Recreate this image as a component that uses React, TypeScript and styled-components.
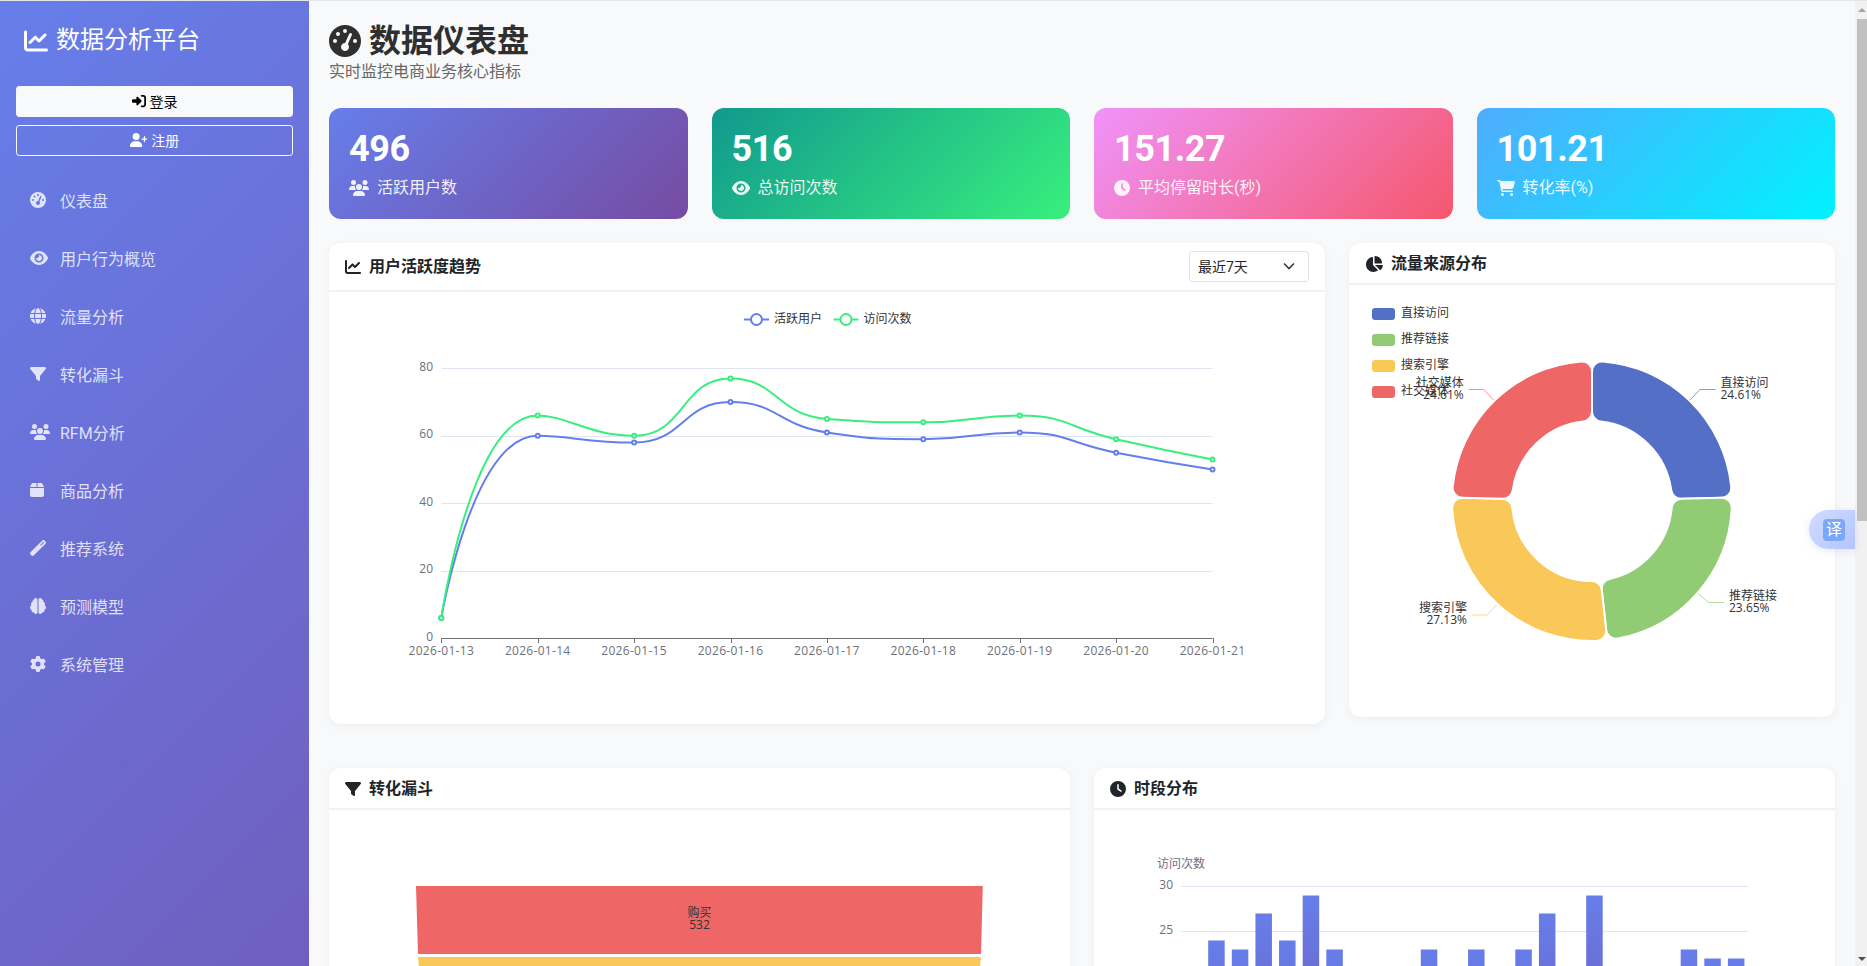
import React from "react";
import styled, { createGlobalStyle } from "styled-components";
import type { IconType } from "react-icons";
import {
  FaBox,
  FaBrain,
  FaCartShopping,
  FaChartLine,
  FaChartPie,
  FaClock,
  FaEye,
  FaFilter,
  FaGaugeHigh,
  FaGear,
  FaGlobe,
  FaRightToBracket,
  FaUserPlus,
  FaUsers,
  FaWandMagic,
} from "react-icons/fa6";

const FONT = `Roboto, "Noto Sans CJK SC", sans-serif`;
const CHART_FONT = `"Open Sans", "Noto Sans CJK SC", sans-serif`;

const GlobalStyle = createGlobalStyle`
  html, body {
    margin: 0;
    padding: 0;
    overflow: hidden;
  }
  body {
    font-family: ${FONT};
    color: #212529;
  }
  * {
    box-sizing: border-box;
  }
`;

// font awesome glyphs are not all square, the react-icons default box would shrink them
const glyph = (icon: IconType, width: number) => styled(icon)`
  display: block;
  flex-shrink: 0;
  height: 1em;
  width: ${width}em;
`;

const ChartLineIcon = glyph(FaChartLine, 1);
const ChartPieIcon = glyph(FaChartPie, 1.125);
const ClockIcon = glyph(FaClock, 1);
const EyeIcon = glyph(FaEye, 1.125);
const FilterIcon = glyph(FaFilter, 1);
const GaugeIcon = glyph(FaGaugeHigh, 1);
const UsersIcon = glyph(FaUsers, 1.25);
const CartIcon = glyph(FaCartShopping, 1.125);
const GlobeIcon = glyph(FaGlobe, 1);
const BoxIcon = glyph(FaBox, 0.875);
const WandIcon = glyph(FaWandMagic, 1);
const BrainIcon = glyph(FaBrain, 1);
const GearIcon = glyph(FaGear, 1);
const SignInIcon = glyph(FaRightToBracket, 1);
const UserPlusIcon = glyph(FaUserPlus, 1.25);

const Page = styled.div`
  position: relative;
  display: flex;
  align-items: flex-start;
  height: 966px;
  overflow: hidden;
  background: #f8f9fa;
  border-top: 1px solid #e3e5e8;
`;

const Sidebar = styled.aside`
  flex: 0 0 309px;
  height: 1790px;
  background: linear-gradient(135deg, #667eea 0%, #764ba2 100%);
  color: #fff;
`;

const Brand = styled.div`
  display: flex;
  align-items: center;
  gap: 8px;
  height: 85px;
  padding: 25px 24px 31px;
  font-size: 24px;
  line-height: 29px;
`;

const AuthBox = styled.div`
  display: flex;
  flex-direction: column;
  gap: 8px;
  padding: 0 16px;
`;

const AuthButton = styled.div<{ $solid?: boolean }>`
  display: flex;
  align-items: center;
  justify-content: center;
  gap: 4px;
  height: 31px;
  padding-bottom: 1px;
  font-size: 14px;
  border-radius: 3.2px;
  border: 1px solid #f8f9fa;
  background: ${(p) => (p.$solid ? "#f8f9fa" : "transparent")};
  color: ${(p) => (p.$solid ? "#000" : "#fff")};
`;

const Nav = styled.nav`
  margin-top: 16px;
`;

const NavItem = styled.div`
  display: flex;
  align-items: center;
  height: 58px;
  padding: 0 0 2px 30px;
  font-size: 16px;
  color: rgba(255, 255, 255, 0.8);
`;

const NavIcon = styled.span`
  flex: 0 0 30px;
`;

const Main = styled.main`
  flex: 1;
  min-width: 0;
  padding: 21px 20px 0;
`;

const Title = styled.h1`
  display: flex;
  align-items: center;
  gap: 8px;
  margin: 0;
  font-size: 32px;
  line-height: 38px;
  font-weight: 700;
  color: #2f2f2f;
`;

const Subtitle = styled.p`
  margin: 0 0 24px;
  font-size: 16px;
  line-height: 24px;
  color: #666;
`;

const StatRow = styled.div`
  display: grid;
  grid-template-columns: repeat(4, 1fr);
  gap: 24px;
  margin-bottom: 24px;
`;

const StatCard = styled.div<{ $from: string; $to: string }>`
  height: 111px;
  padding: 20px;
  border-radius: 12px;
  color: #fff;
  background: linear-gradient(135deg, ${(p) => p.$from} 0%, ${(p) => p.$to} 100%);
`;

const StatValue = styled.div`
  font-size: 36px;
  line-height: 42px;
  font-weight: 700;
  letter-spacing: -0.4px;
  margin-bottom: 6px;
`;

const StatLabel = styled.div`
  display: flex;
  align-items: center;
  gap: 8px;
  font-size: 16px;
  line-height: 24px;
  opacity: 0.9;
`;

const ChartRow = styled.div<{ $columns: string; $bottom?: number }>`
  display: grid;
  grid-template-columns: ${(p) => p.$columns};
  gap: 24px;
  align-items: start;
  margin-bottom: ${(p) => p.$bottom ?? 0}px;
`;

const Card = styled.section`
  background: #fff;
  border-radius: 12px;
  box-shadow: 0 2px 10px rgba(0, 0, 0, 0.05);
  overflow: hidden;
`;

const CardHeader = styled.header`
  display: flex;
  align-items: center;
  justify-content: space-between;
  padding: 8px 16px;
  border-bottom: 2px solid #f1f1f3;
`;

const CardTitle = styled.h5<{ $nudge?: boolean }>`
  display: flex;
  align-items: center;
  gap: 8px;
  margin: 0 0 ${(p) => (p.$nudge ? "-1px" : "0")};
  padding-top: ${(p) => (p.$nudge ? "1px" : "0")};
  font-size: 16px;
  line-height: 24px;
  font-weight: 700;
  color: #212529;
`;

const RangeSelect = styled.div`
  display: flex;
  align-items: center;
  justify-content: space-between;
  width: 120px;
  height: 31px;
  padding: 0 13px 1px 8px;
  font-size: 14px;
  color: #212529;
  background: #fff;
  border: 1px solid #dee2e6;
  border-radius: 3.2px;
`;

const ChartSvg = styled.svg`
  display: block;
  width: 100%;
`;

const ChartText = styled.text<{ $color?: string; $spaced?: boolean }>`
  font-family: ${CHART_FONT};
  font-size: 12px;
  letter-spacing: ${(p) => (p.$spaced ? "0.3px" : "0")};
  fill: ${(p) => p.$color ?? "#6e7079"};
`;

const ScrollTrack = styled.div`
  flex: 0 0 12px;
  display: flex;
  flex-direction: column;
  justify-content: space-between;
  height: 100%;
  padding-left: 2px;
  background: #f1f1f1;
`;

const ScrollThumb = styled.div`
  width: 10px;
  height: 502px;
  background: #c1c1c1;
`;

const ScrollArrow = styled.div<{ $down?: boolean }>`
  height: 18px;
  display: flex;
  justify-content: center;
  padding-top: ${(p) => (p.$down ? "9px" : "7px")};

  &::before {
    content: "";
    width: 0;
    height: 0;
    border-left: 4px solid transparent;
    border-right: 4px solid transparent;
    ${(p) =>
      p.$down ? "border-top: 4px solid #505050;" : "border-bottom: 4px solid #a3a3a3;"}
  }
`;

const TranslatePill = styled.div`
  position: absolute;
  right: 12px;
  top: 509px;
  display: flex;
  align-items: center;
  justify-content: flex-end;
  width: 46px;
  height: 39px;
  padding-right: 10px;
  border-radius: 20px 0 0 20px;
  background: linear-gradient(135deg, #d0dcff, #b4c5ff);
  box-shadow: 0 2px 8px rgba(80, 110, 220, 0.15);
`;

const TranslateMark = styled.span`
  display: flex;
  align-items: center;
  justify-content: center;
  width: 22px;
  height: 22px;
  border-radius: 4px;
  background: #7aa7f8;
  color: #fff;
  font-size: 16px;
  line-height: 1;
`;

const stats = [
  { value: "496", label: "活跃用户数", Icon: UsersIcon, from: "#667eea", to: "#764ba2" },
  { value: "516", label: "总访问次数", Icon: EyeIcon, from: "#11998e", to: "#38ef7d" },
  { value: "151.27", label: "平均停留时长(秒)", Icon: ClockIcon, from: "#f093fb", to: "#f5576c" },
  { value: "101.21", label: "转化率(%)", Icon: CartIcon, from: "#4facfe", to: "#00f2fe" },
];

const navItems = [
  { label: "仪表盘", Icon: GaugeIcon },
  { label: "用户行为概览", Icon: EyeIcon },
  { label: "流量分析", Icon: GlobeIcon },
  { label: "转化漏斗", Icon: FilterIcon },
  { label: "RFM分析", Icon: UsersIcon },
  { label: "商品分析", Icon: BoxIcon },
  { label: "推荐系统", Icon: WandIcon },
  { label: "预测模型", Icon: BrainIcon },
  { label: "系统管理", Icon: GearIcon },
];

const dates = [13, 14, 15, 16, 17, 18, 19, 20, 21].map((d) => `2026-01-${d}`);
const activeUsers = [6, 60, 58, 70, 61, 59, 61, 55, 50];
const visits = [6, 66, 60, 77, 65, 64, 66, 59, 53];

const lineX = (i: number) => 441.3 + i * 96.4;
const lineY = (v: number) => 638.3 - v * 3.375;

const clamp = (v: number, a: number, b: number) =>
  Math.max(Math.min(v, Math.max(a, b)), Math.min(a, b));

// same bezier construction as echarts' smooth line (smooth = 0.5)
const smoothPath = (pts: number[][]) => {
  let d = `M${pts[0][0]} ${pts[0][1]}`;
  let [cx, cy] = pts[0];
  for (let i = 1; i < pts.length; i++) {
    const [x, y] = pts[i];
    const [px, py] = pts[i - 1];
    const next = pts[i + 1];
    let nx = x;
    let ny = y;
    let c1x = x;
    let c1y = y;
    if (next) {
      const vx = next[0] - px;
      const vy = next[1] - py;
      const lenPrev = Math.hypot(x - px, y - py);
      const lenNext = Math.hypot(next[0] - x, next[1] - y);
      const ratio = lenNext / (lenNext + lenPrev);
      c1x = clamp(x + vx * 0.5 * ratio, x, next[0]);
      c1y = clamp(y + vy * 0.5 * ratio, y, next[1]);
      nx = clamp(x - ((c1x - x) * lenPrev) / lenNext, px, x);
      ny = clamp(y - ((c1y - y) * lenPrev) / lenNext, py, y);
      c1x = x + ((x - nx) * lenNext) / lenPrev;
      c1y = y + ((y - ny) * lenNext) / lenPrev;
    }
    d += ` C${cx} ${cy} ${nx} ${ny} ${x} ${y}`;
    cx = c1x;
    cy = c1y;
  }
  return d;
};

const LineSeries = ({ data, color }: { data: number[]; color: string }) => {
  const pts = data.map((v, i) => [lineX(i), lineY(v)]);
  return (
    <g>
      <path d={smoothPath(pts)} fill="none" stroke={color} strokeWidth={2} />
      {pts.map(([x, y]) => (
        <circle key={x} cx={x} cy={y} r={2} fill="#fff" stroke={color} strokeWidth={2} />
      ))}
    </g>
  );
};

const LegendLine = ({ x, color, label }: { x: number; color: string; label: string }) => (
  <g>
    <line x1={x} x2={x + 25} y1={319.5} y2={319.5} stroke={color} strokeWidth={2} />
    <circle cx={x + 12.5} cy={319.5} r={5.5} fill="#fff" stroke={color} strokeWidth={2} />
    <ChartText x={x + 30} y={323} $color="#333">
      {label}
    </ChartText>
  </g>
);

const TrendChart = () => (
  <ChartSvg viewBox="329 292 996 432" height={432}>
    <LegendLine x={744} color="#667eea" label="活跃用户" />
    <LegendLine x={833.5} color="#38ef7d" label="访问次数" />
    {[20, 40, 60, 80].map((v) => (
      <line
        key={v}
        x1={441.3}
        x2={1212.5}
        y1={Math.round(lineY(v)) + 0.5}
        y2={Math.round(lineY(v)) + 0.5}
        stroke="#e0e6f1"
      />
    ))}
    {[0, 20, 40, 60, 80].map((v) => (
      <ChartText key={v} x={433} y={lineY(v) + 2.5} textAnchor="end">
        {v}
      </ChartText>
    ))}
    <line x1={441.3} x2={1212.5} y1={638.5} y2={638.5} stroke="#6e7079" />
    {dates.map((date, i) => (
      <g key={date}>
        <line
          x1={Math.round(lineX(i)) + 0.5}
          x2={Math.round(lineX(i)) + 0.5}
          y1={638}
          y2={643}
          stroke="#6e7079"
        />
        <ChartText x={lineX(i)} y={655} textAnchor="middle" $spaced>
          {date}
        </ChartText>
      </g>
    ))}
    <LineSeries data={activeUsers} color="#667eea" />
    <LineSeries data={visits} color="#38ef7d" />
  </ChartSvg>
);

const traffic = [
  {
    name: "直接访问",
    pct: 24.61,
    color: "#5470c6",
    line: "1690,400 1700,389.5 1715.5,389.5",
    textX: 1720.5,
    textY: 387,
    anchor: "start",
  },
  {
    name: "推荐链接",
    pct: 23.65,
    color: "#91cc75",
    line: "1698,593.5 1708.7,602.5 1724,602.5",
    textX: 1729,
    textY: 600,
    anchor: "start",
  },
  {
    name: "搜索引擎",
    pct: 27.13,
    color: "#fac858",
    line: "1496.6,605 1487,615 1472.4,615",
    textX: 1467,
    textY: 612,
    anchor: "end",
  },
  {
    name: "社交媒体",
    pct: 24.61,
    color: "#ee6666",
    line: "1493.6,400 1483.5,389.5 1468.7,389.5",
    textX: 1463.7,
    textY: 387,
    anchor: "end",
  },
];

const sectorPath = (a0: number, a1: number) => {
  const [cx, cy, R, r, c] = [1592, 501, 140, 80, 10];
  const at = (a: number, rad: number) =>
    `${(cx + rad * Math.sin(a)).toFixed(2)} ${(cy - rad * Math.cos(a)).toFixed(2)}`;
  const outerD = R - c;
  const innerD = r + c;
  const outerOff = Math.asin(c / outerD);
  const innerOff = Math.asin(c / innerD);
  const outerEdge = Math.sqrt(outerD * outerD - c * c);
  const innerEdge = Math.sqrt(innerD * innerD - c * c);
  return [
    `M${at(a0, outerEdge)}`,
    `A${c} ${c} 0 0 1 ${at(a0 + outerOff, R)}`,
    `A${R} ${R} 0 0 1 ${at(a1 - outerOff, R)}`,
    `A${c} ${c} 0 0 1 ${at(a1, outerEdge)}`,
    `L${at(a1, innerEdge)}`,
    `A${c} ${c} 0 0 1 ${at(a1 - innerOff, r)}`,
    `A${r} ${r} 0 0 0 ${at(a0 + innerOff, r)}`,
    `A${c} ${c} 0 0 1 ${at(a0, innerEdge)}`,
    "Z",
  ].join(" ");
};

const TrafficChart = () => {
  let angle = 0;
  return (
    <ChartSvg viewBox="1349 285 486 432" height={432}>
      {traffic.map((t) => {
        const start = angle;
        angle += (t.pct / 100) * Math.PI * 2;
        return (
          <g key={t.name}>
            <path d={sectorPath(start, angle)} fill={t.color} stroke="#fff" strokeWidth={2} />
            <polyline points={t.line} fill="none" stroke={t.color} strokeOpacity={0.7} />
          </g>
        );
      })}
      {traffic.map((t, i) => (
        <g key={t.name}>
          <rect x={1372} y={308 + i * 26} width={23} height={12} rx={3} fill={t.color} />
          <ChartText x={1401} y={317 + i * 26} $color="#333">
            {t.name}
          </ChartText>
        </g>
      ))}
      {traffic.map((t) => (
        <ChartText
          key={t.name}
          x={t.textX}
          y={t.textY}
          textAnchor={t.anchor as "start" | "end"}
          $color="#333"
        >
          <tspan x={t.textX}>{t.name}</tspan>
          <tspan x={t.textX} dy={11.7}>
            {t.pct}%
          </tspan>
        </ChartText>
      ))}
    </ChartSvg>
  );
};

const FunnelChart = () => (
  <ChartSvg viewBox="329 810 741 400" height={400}>
    <polygon points="416,886 982.8,886 981,954 418,954" fill="#ee6666" />
    <polygon points="418,957 981,957 974,1025 425,1025" fill="#fac858" />
    <ChartText x={699.5} y={917} textAnchor="middle" $color="#333">
      购买
    </ChartText>
    <ChartText x={699.5} y={928.5} textAnchor="middle" $color="#333">
      532
    </ChartText>
  </ChartSvg>
);

const hourly = [19, 24, 23, 27, 24, 29, 23, 20, 18, 21, 23, 20, 23, 21, 23, 27, 21, 29, 19, 20, 21, 23, 22, 22];

const HourlyChart = () => {
  const barY = (v: number) => 886.5 + (30 - v) * 9;
  return (
    <ChartSvg viewBox="1094 810 741 400" height={400}>
      <defs>
        <linearGradient id="hourBar" x1="0" y1="0" x2="0" y2="1">
          <stop offset="0" stopColor="#667eea" />
          <stop offset="1" stopColor="#764ba2" />
        </linearGradient>
      </defs>
      <ChartText x={1157} y={868}>
        访问次数
      </ChartText>
      {[30, 25].map((v) => (
        <g key={v}>
          <line x1={1181} x2={1748} y1={barY(v)} y2={barY(v)} stroke="#e0e6f1" />
          <ChartText x={1173} y={barY(v) + 2.5} textAnchor="end">
            {v}
          </ChartText>
        </g>
      ))}
      {hourly.map((v, h) => (
        <rect
          key={h}
          x={1184.56 + h * 23.625}
          y={barY(v)}
          width={16.5}
          height={270 - (30 - v) * 9}
          fill="url(#hourBar)"
        />
      ))}
    </ChartSvg>
  );
};

const App = () => {
  return (
    <Page>
      <GlobalStyle />
      <Sidebar>
        <Brand>
          <ChartLineIcon />
          数据分析平台
        </Brand>
        <AuthBox>
          <AuthButton $solid>
            <SignInIcon />
            登录
          </AuthButton>
          <AuthButton>
            <UserPlusIcon />
            注册
          </AuthButton>
        </AuthBox>
        <Nav>
          {navItems.map(({ label, Icon }) => (
            <NavItem key={label}>
              <NavIcon>
                <Icon />
              </NavIcon>
              {label}
            </NavItem>
          ))}
        </Nav>
      </Sidebar>

      <Main>
        <Title>
          <GaugeIcon />
          数据仪表盘
        </Title>
        <Subtitle>实时监控电商业务核心指标</Subtitle>

        <StatRow>
          {stats.map(({ value, label, Icon, from, to }) => (
            <StatCard key={label} $from={from} $to={to}>
              <StatValue>{value}</StatValue>
              <StatLabel>
                <Icon />
                {label}
              </StatLabel>
            </StatCard>
          ))}
        </StatRow>

        <ChartRow $columns="996fr 486fr" $bottom={44}>
          <Card>
            <CardHeader>
              <CardTitle>
                <ChartLineIcon />
                用户活跃度趋势
              </CardTitle>
              <RangeSelect>
                最近7天
                <svg width="12" height="8" viewBox="0 0 12 8">
                  <path d="M1 1.5l5 5 5-5" fill="none" stroke="#343a40" strokeWidth="1.6" />
                </svg>
              </RangeSelect>
            </CardHeader>
            <TrendChart />
          </Card>
          <Card>
            <CardHeader>
              <CardTitle $nudge>
                <ChartPieIcon />
                流量来源分布
              </CardTitle>
            </CardHeader>
            <TrafficChart />
          </Card>
        </ChartRow>

        <ChartRow $columns="1fr 1fr">
          <Card>
            <CardHeader>
              <CardTitle $nudge>
                <FilterIcon />
                转化漏斗
              </CardTitle>
            </CardHeader>
            <FunnelChart />
          </Card>
          <Card>
            <CardHeader>
              <CardTitle $nudge>
                <ClockIcon />
                时段分布
              </CardTitle>
            </CardHeader>
            <HourlyChart />
          </Card>
        </ChartRow>
      </Main>

      <ScrollTrack>
        <div>
          <ScrollArrow />
          <ScrollThumb />
        </div>
        <ScrollArrow $down />
      </ScrollTrack>

      <TranslatePill>
        <TranslateMark>译</TranslateMark>
      </TranslatePill>
    </Page>
  );
};

export default App;
